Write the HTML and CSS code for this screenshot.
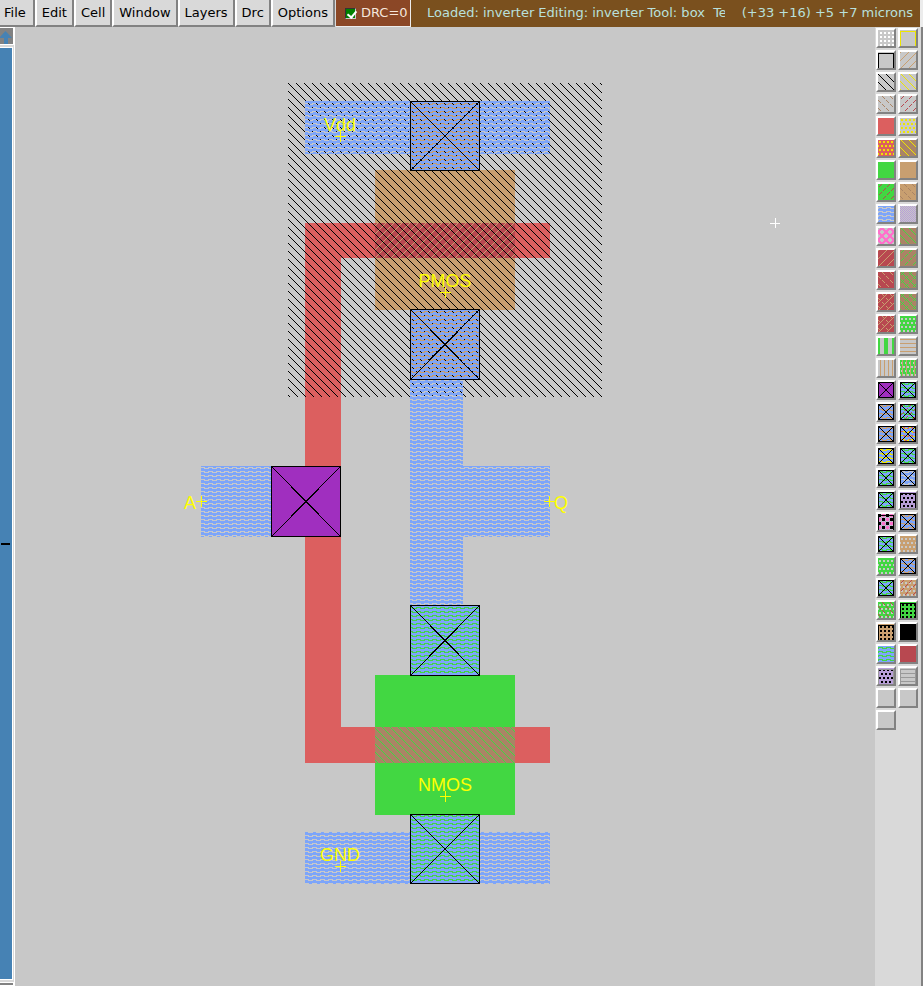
FILE: index.html
```html
<!DOCTYPE html>
<html lang="en">
<head>
<meta charset="utf-8">
<title>inverter</title>
<link rel="stylesheet" href="styles.css">
</head>
<body>
<div class="app">
  <header class="bar">
    <nav class="menus">
      <button class="menu menu-first">File</button>
      <button class="menu">Edit</button>
      <button class="menu">Cell</button>
      <button class="menu">Window</button>
      <button class="menu">Layers</button>
      <button class="menu">Drc</button>
      <button class="menu">Options</button>
    </nav>
    <label class="drc"><input type="checkbox" checked><span>DRC=0</span></label>
    <div class="status">
      <span class="message">Loaded: inverter Editing: inverter Tool: box&nbsp; Te</span>
      <span class="coords">(+33 +16) +5 +7 microns</span>
    </div>
  </header>
  <main class="work">
    <div class="scroll">
      <button class="arrow" aria-label="Scroll up"><svg width="12" height="13" viewBox="0 0 12 13"><path d="M5.500 0L12 7H8v6H4V7H-1z"/></svg></button>
      <div class="track"><span class="mark"></span></div>
      <button class="arrow arrow-down" aria-label="Scroll down"><svg width="12" height="13" viewBox="0 0 12 13"><path d="M4 0h4v6h4L5.500 13L-1 6h5z"/></svg></button>
    </div>
    <svg class="canvas" shape-rendering="crispEdges">
      <defs id="stipples"></defs>
      <g transform="translate(-15 -27)">
        <path class="poly" d="M305 223H550V258H341V727H550V763H305z"/>
        <rect class="pdiff" x="375" y="170" width="140" height="140"/>
        <rect class="ndiff" x="375" y="675" width="140" height="140"/>
        <rect class="pfet" x="375" y="223" width="140" height="35"/>
        <rect fill="url(#pfet)" x="375" y="223" width="140" height="35"/>
        <rect class="nfet" x="375" y="727" width="140" height="36"/>
        <rect fill="url(#nfet)" x="375" y="727" width="140" height="36"/>
        <rect class="pdiff" x="410" y="101" width="70" height="70"/>
        <rect class="pdiff" x="410" y="309" width="70" height="71"/>
        <rect class="ndiff" x="410" y="605" width="70" height="71"/>
        <rect class="ndiff" x="410" y="814" width="70" height="70"/>
        <rect fill="url(#well)" x="288" y="83" width="314" height="314"/>
        <g fill="url(#metal)">
          <path d="M305 101H550V154H480V171H410V154H305z"/>
          <path d="M410 309H480V380H463V466H550V537H463V605H480V676H410z"/>
          <rect x="201" y="466" width="70" height="71"/>
          <path d="M305 832H410V814H480V832H550V884H305z"/>
        </g>
        <rect class="polycontact" x="271" y="466" width="70" height="71"/>
        <g class="cut">
          <path d="M410.500 101.500h69v69h-69zl69 69M479.500 101.500l-69 69"/>
          <path d="M410.500 309.500h69v70h-69zl69 70M479.500 309.500l-69 70"/>
          <path d="M271.500 466.500h69v70h-69zl69 70M340.500 466.500l-69 70"/>
          <path d="M410.500 605.500h69v70h-69zl69 70M479.500 605.500l-69 70"/>
          <path d="M410.500 814.500h69v69h-69zl69 69M479.500 814.500l-69 69"/>
        </g>
        <g class="cross">
          <path d="M335 136.500h11M340.500 131v11"/>
          <path d="M440 292.500h11M445.500 287v11"/>
          <path d="M196 501.500h11M201.500 496v11"/>
          <path d="M544 501.500h11M549.500 496v11"/>
          <path d="M440 796.500h11M445.500 791v11"/>
          <path d="M335 866.500h11M340.500 861v11"/>
          <path class="cursor" d="M770 223.500h10M775.500 218v10"/>
        </g>
        <g class="names">
          <text x="340" y="131">Vdd</text>
          <text x="445" y="287">PMOS</text>
          <text x="190" y="509">A</text>
          <text x="561" y="509">Q</text>
          <text x="445" y="791">NMOS</text>
          <text x="340" y="861">GND</text>
        </g>
      </g>
    </svg>
    <aside class="palette" id="palette" aria-label="Layers"></aside>
  </main>
</div>
<script src="script.js"></script>
</body>
</html>
```
FILE: styles.css
```css
* { box-sizing: border-box; }
body { margin: 0; background: #c8c8c8; font: 13px/16px "DejaVu Sans", sans-serif; }
button { font: inherit; color: #000; border-radius: 0; margin: 0; }
.app { display: flex; flex-direction: column; height: 100vh; overflow: hidden; }
.bar { display: flex; height: 27px; flex: none; background: #d9d9d9; border-right: 3px solid #ececec; }
.menus { display: flex; padding-right: 1px; }
.menu { height: 27px; padding: 0 5px; background: #d9d9d9; border: 2px solid #828282; border-top: 0; border-left-color: #fff; }
.menu-first { border-left: 0; padding-left: 4px; padding-right: 7px; }
.drc { display: flex; align-items: center; gap: 5px; width: 75px; padding: 0 0 0 9px; background: #8b4726; color: #f5e6dc; border: 1px solid #ececec; border-top: 0; border-left: 0; white-space: nowrap; }
.drc input { appearance: none; flex: none; width: 11px; height: 11px; margin: 0; border: 1px solid #c8c8c8; border-top-color: #333; border-left-color: #333; background: #008000; position: relative; }
.drc input::after { content: ""; position: absolute; left: 3px; top: 0; width: 4px; height: 7px; border: solid #fff; border-width: 0 2px 2px 0; transform: rotate(40deg); }
.status { display: flex; flex: 1; min-width: 0; padding: 5px 7px 0 16px; gap: 17px; background: #7a501e; color: #b9e0dc; white-space: pre; }
.message { flex: 1; min-width: 0; overflow: hidden; }
.work { display: flex; flex: 1; min-height: 0; }
.scroll { display: flex; flex-direction: column; flex: none; width: 15px; background: #d9d9d9; border-right: 1px solid #fff; }
.arrow { flex: none; width: 14px; height: 18px; padding: 2px 0 0; background: #828282; border: 1px solid #fff; border-left: 0; line-height: 0; overflow: hidden; }
.arrow-down { height: 4px; }
.arrow svg { display: block; fill: #4682b4; }
.track { display: flex; align-items: center; flex: 1; margin: 2px 0; background: #4682b4; border: 1px solid #fff; border-left: 0; width: 13px; }
.mark { width: 9px; height: 2px; margin: 60px 0 0 1px; background: #000; }
.canvas { flex: 1; min-width: 0; height: 100%; background: #c8c8c8; }
.poly { fill: #dc5f5f; }
.pdiff { fill: #c89f70; }
.ndiff { fill: #42d742; }
.pfet { fill: #b84850; }
.nfet { fill: #aa8465; }
.polycontact { fill: #a02fbf; }
.cut { fill: none; stroke: #000; }
.cross { fill: none; stroke: #ff0; }
.cross .cursor { stroke: #fff; }
.names { fill: #ff0; font: 18px "Liberation Sans", sans-serif; text-anchor: middle; }
.palette { display: grid; grid-template-columns: repeat(2, 20px); grid-auto-rows: 20px; gap: 2px; align-content: start; flex: none; width: 48px; padding: 1px; background: #d9d9d9; border-right: 2px solid #828282; }
.layer { padding: 0; border: 2px solid #828282; border-top-color: #fff; border-left-color: #fff; background: #c8c8c8; }
.layer svg { display: block; width: 16px; height: 16px; }
```
FILE: script.js
```js
const NS = "http://www.w3.org/2000/svg";

// Eight rows per stipple, one byte per row, leftmost pixel in the high bit.
const STIPPLES = {
  dots: "0000333300003333",
  down: "8040201008040201",
  up: "0102040810204080",
  downShort: "0804020080402000",
  upShort: "1020400001020400",
  blocks: "0066660000999900",
  metal: "ff0770ffff0770ff",
  checker: "aa55aa55aa55aa55",
  rings: "3c7ee7c3c3e77e3c",
  mesh: "ffff9999ffff6666",
  bars: "c3c3c3c3c3c3c3c3",
  rows: "00ff000000ff0000",
  cols: "2222222222222222",
  chess: "0e0e0e00e0e0e000",
  antichess: "e0e0e0000e0e0e00"
};
const C = {
  gray: "#c8c8c8", white: "#fff", yellow: "#eee600", black: "#000", tan: "#c89f70",
  brown: "#aa8465", red: "#dc5f5f", dark: "#b84850", green: "#42d742", blue: "#7da5fa",
  violet: "#a02fbf", lilac: "#b89fd8", pink: "#ff70cc", line: "#999"
};

const defs = document.getElementById("stipples");

function addStipple(id, name, color, dx = 0, dy = 0) {
  let d = "";
  for (let y = 0; y < 8; y++) {
    const byte = parseInt(STIPPLES[name].substr(y * 2, 2), 16);
    for (let x = 0; x < 8; x++) if (byte & (128 >> x)) d += `M${x} ${y}h1v1h-1z`;
  }
  const p = document.createElementNS(NS, "pattern");
  for (const [k, v] of Object.entries({ id, x: dx, y: dy, width: 8, height: 8, patternUnits: "userSpaceOnUse" })) p.setAttribute(k, v);
  p.innerHTML = `<path d="${d}" fill="${color}"/>`;
  defs.append(p);
}

addStipple("well", "down", C.black, 0, 3);
addStipple("metal", "metal", C.blue, 0, 2);
addStipple("pfet", "up", C.tan, 1);
addStipple("nfet", "down", C.green, 0, 1);

// "base stipple:color ... frame cut": one entry per palette cell, row by row.
const LAYERS = [
  "gray dots:white", "gray frame:yellow", "gray frame:black", "gray up:tan",
  "gray down:black", "gray down:yellow", "gray downShort:brown", "gray upShort:dark",
  "red", "gray blocks:yellow", "red blocks:yellow", "brown down:yellow",
  "green", "tan", "green upShort:dark", "tan downShort:brown",
  "gray metal:blue", "gray checker:lilac", "gray rings:pink", "brown down:green",
  "dark up:tan", "brown upShort:green", "dark downShort:tan", "brown down:green upShort:green",
  "dark up:tan downShort:tan", "brown down:green upShort:green", "dark up:tan downShort:tan", "gray mesh:green",
  "gray bars:green", "gray rows:tan", "gray cols:tan", "gray mesh:green cols:tan",
  "violet cut", "green metal:blue cut", "tan metal:blue cut", "green metal:blue upShort:dark cut",
  "tan metal:blue cut", "red blocks:yellow metal:blue cut", "yellow metal:blue cut", "green metal:blue cut",
  "green metal:blue cut", "gray metal:blue cut", "green metal:blue cut", "lilac blocks:black frame:black",
  "gray checker:lilac chess:pink antichess:black frame:black", "tan metal:blue cut", "green metal:blue cut", "gray mesh:tan",
  "gray mesh:green", "tan metal:blue cut", "green metal:blue cut", "gray mesh:tan upShort:dark",
  "gray mesh:green downShort:dark", "green dots:black frame:black", "tan dots:black frame:black", "black",
  "green metal:blue", "dark", "lilac blocks:black frame:line", "gray rows:line frame:line",
  "gray", "gray", "gray"
];

const palette = document.getElementById("palette");
LAYERS.forEach((spec, i) => {
  const [base, ...parts] = spec.split(" ");
  let art = `<rect width="16" height="16" fill="${C[base]}"/>`;
  parts.forEach((part) => {
    const [name, color] = part.split(":");
    if (name === "frame") {
      art += `<path d="M.500 16V1.500h15V16" fill="none" stroke="${C[color]}"/>`;
    } else if (name === "cut") {
      art += `<path d="M.500 .500h15v15h-15zl15 15M15.500 .500l-15 15" fill="none" stroke="#000"/>`;
    } else {
      const id = `${name}-${color}`;
      const shift = color !== "black" && (name === "down" || name === "up") ? 1 : 0;
      if (!document.getElementById(id)) addStipple(id, name, C[color], shift);
      art += `<rect width="16" height="16" fill="url(#${id})"/>`;
    }
  });
  const b = document.createElement("button");
  b.className = "layer";
  b.setAttribute("aria-label", `Layer ${i + 1}`);
  b.innerHTML = `<svg viewBox="0 0 16 16" shape-rendering="crispEdges">${art}</svg>`;
  palette.append(b);
});
```
